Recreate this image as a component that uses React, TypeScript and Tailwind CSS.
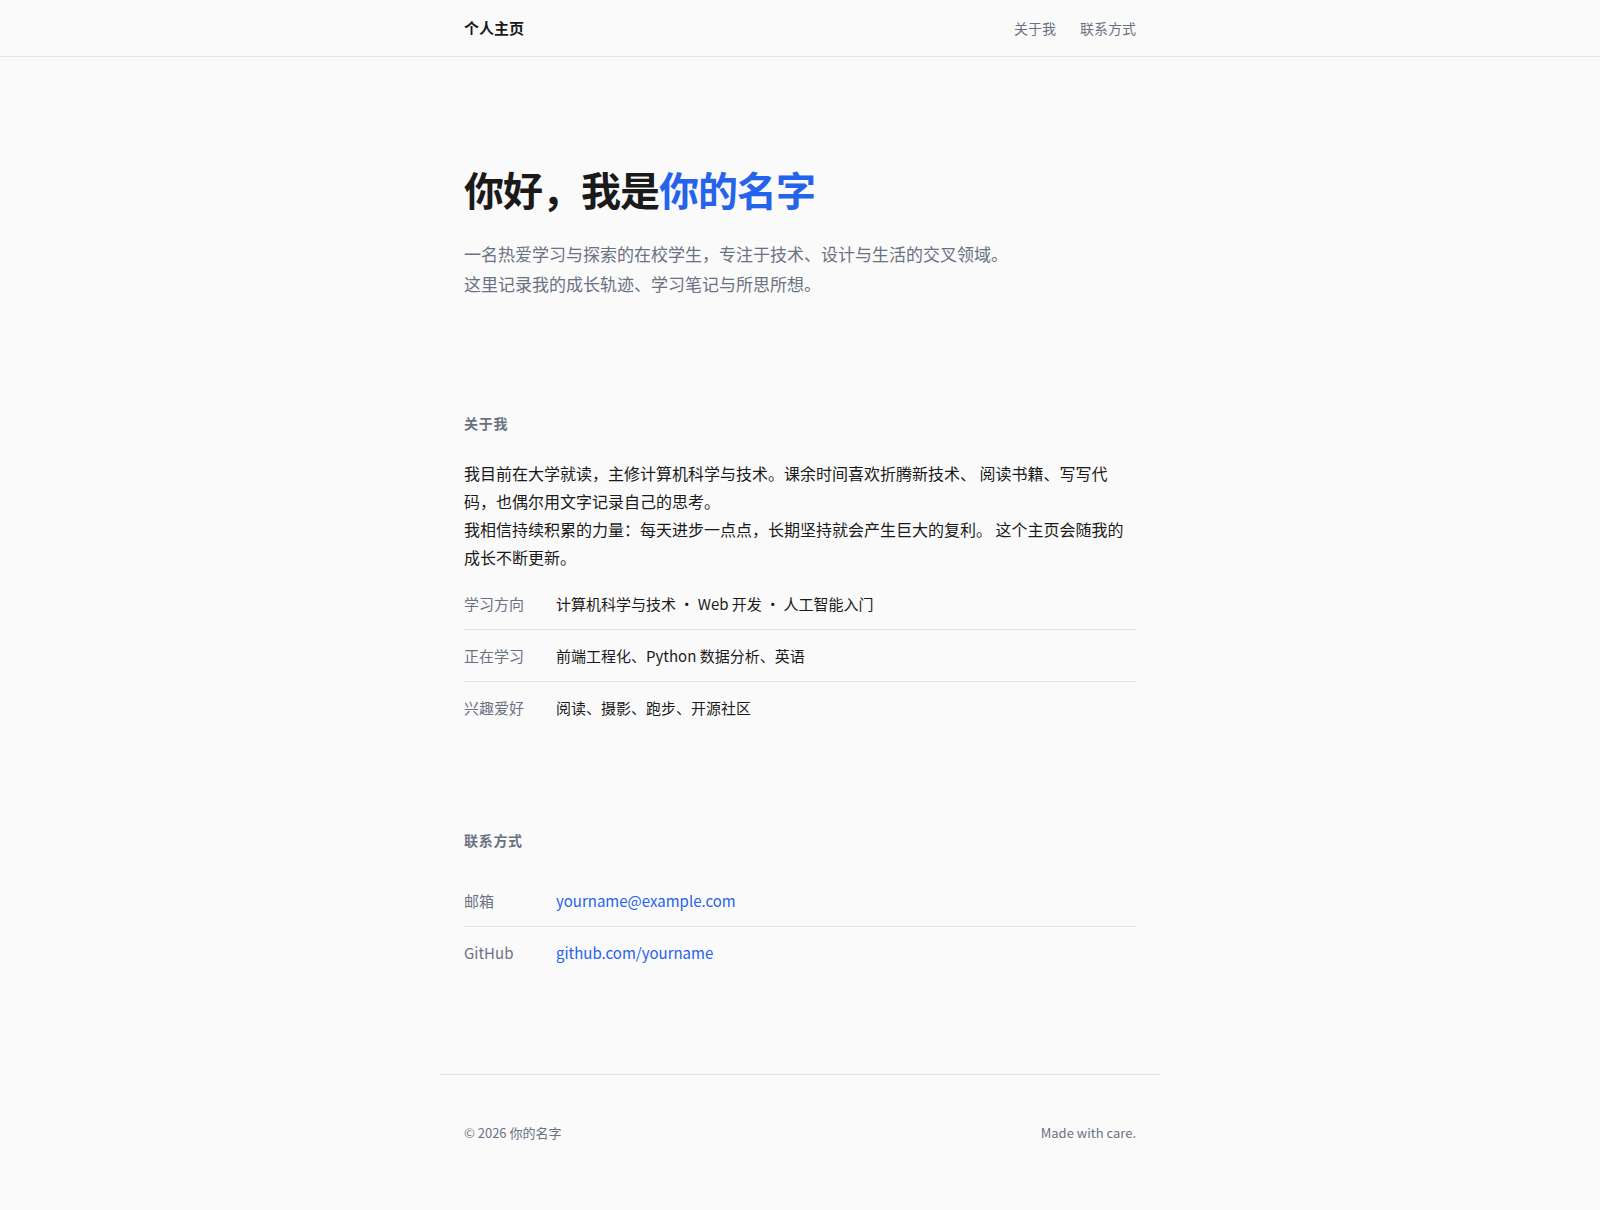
const info = [
  { label: '学习方向', value: '计算机科学与技术 · Web 开发 · 人工智能入门' },
  { label: '正在学习', value: '前端工程化、Python 数据分析、英语' },
  { label: '兴趣爱好', value: '阅读、摄影、跑步、开源社区' },
];

const contacts = [
  { label: '邮箱', value: 'yourname@example.com', href: 'mailto:yourname@example.com' },
  { label: 'GitHub', value: 'github.com/yourname', href: 'https://github.com/yourname' },
];

export default function App() {
  return (
    <div className="min-h-screen bg-[#fafafa] text-[#1a1a1a] font-['Noto_Sans_CJK_SC','Noto_Sans',sans-serif]">
      {/* Top nav */}
      <header className="border-b border-[#e5e5e5]">
        <div className="mx-auto flex h-14 max-w-[720px] items-center justify-between px-6">
          <span className="text-[15px] font-semibold">个人主页</span>
          <nav className="flex gap-6 text-sm text-gray-500">
            <a href="#about" className="hover:text-gray-900">关于我</a>
            <a href="#contact" className="hover:text-gray-900">联系方式</a>
          </nav>
        </div>
      </header>

      <main className="mx-auto max-w-[720px] px-6 pb-12">
        {/* Hero */}
        <section className="pt-[110px] pb-[66px]">
          <h1 className="text-[40px] font-bold leading-[1.1] tracking-tight">
            你好，我是<span className="text-[#2563eb]">你的名字</span>
          </h1>
          <p className="mt-[28px] text-[17px] leading-[1.75] text-gray-500">
            一名热爱学习与探索的在校学生，专注于技术、设计与生活的交叉领域。
            <br />
            这里记录我的成长轨迹、学习笔记与所思所想。
          </p>
        </section>

        {/* About */}
        <section id="about" className="py-12">
          <h2 className="mb-[26px] text-sm font-semibold tracking-wider text-gray-500">关于我</h2>
          <p className="text-base leading-7">
            我目前在大学就读，主修计算机科学与技术。课余时间喜欢折腾新技术、 阅读书籍、写写代码，也偶尔用文字记录自己的思考。
          </p>
          <p className="text-base leading-7">
            我相信持续积累的力量：每天进步一点点，长期坚持就会产生巨大的复利。 这个主页会随我的成长不断更新。
          </p>
          <dl className="mt-[7px] divide-y divide-[#e5e5e5]">
            {info.map(item => (
              <div key={item.label} className="flex py-[13px] text-[15px] leading-[25px]">
                <dt className="w-[92px] shrink-0 text-gray-500">{item.label}</dt>
                <dd>{item.value}</dd>
              </div>
            ))}
          </dl>
        </section>

        {/* Contact */}
        <section id="contact" className="pt-[49px] pb-12">
          <h2 className="mb-[25px] text-sm font-semibold tracking-wider text-gray-500">联系方式</h2>
          <dl className="divide-y divide-[#e5e5e5]">
            {contacts.map(item => (
              <div key={item.label} className="flex py-[13px] text-[15px] leading-[25px]">
                <dt className="w-[92px] shrink-0 text-gray-500">{item.label}</dt>
                <dd>
                  <a href={item.href} className="text-[#2563eb] hover:underline">{item.value}</a>
                </dd>
              </div>
            ))}
          </dl>
        </section>
      </main>

      <footer className="mx-auto max-w-[720px] border-t border-[#e5e5e5]">
        <div className="flex items-center justify-between px-6 py-12 text-[13px] text-gray-500">
          <span>© 2026 你的名字</span>
          <span>Made with care.</span>
        </div>
      </footer>
    </div>
  );
}
